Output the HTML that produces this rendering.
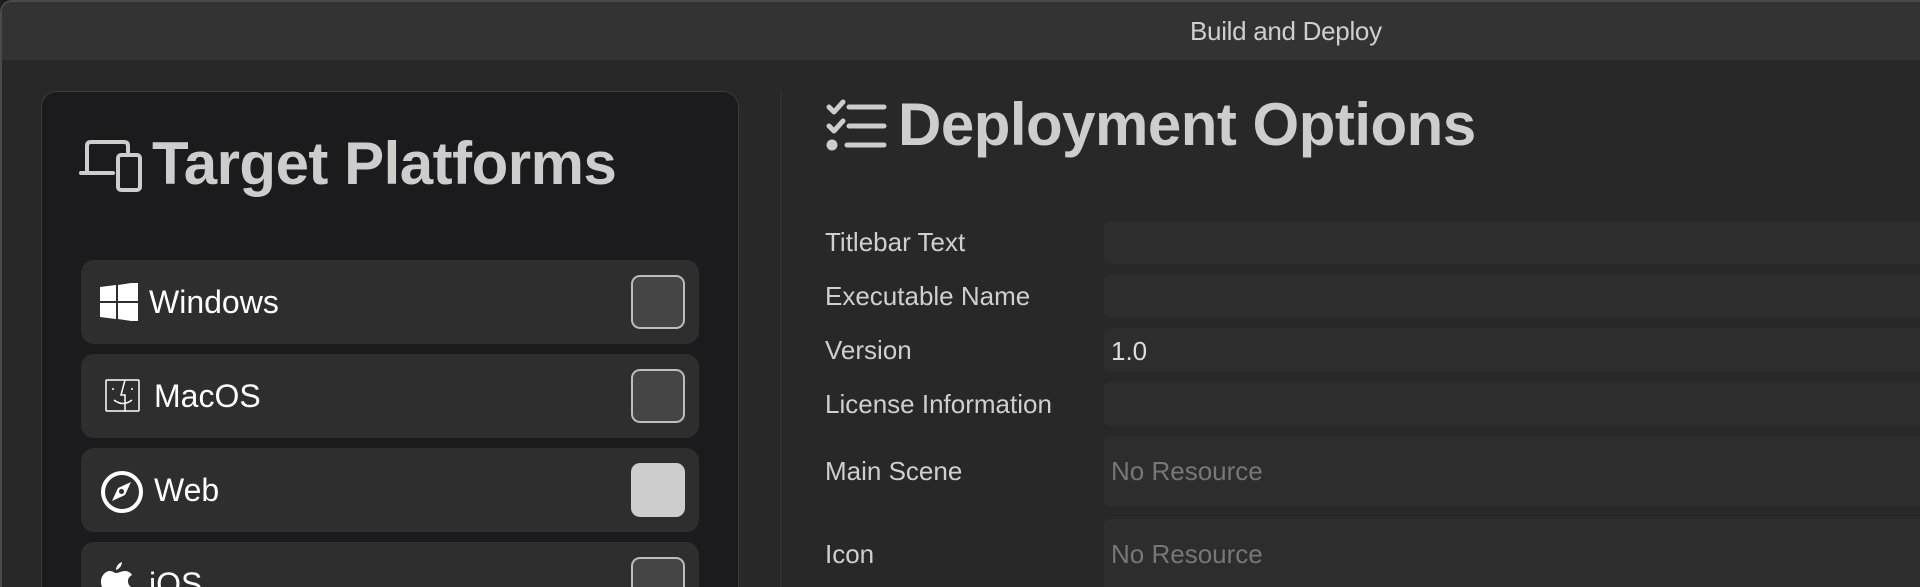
<!DOCTYPE html>
<html style="width:1920px;height:587px;overflow:hidden"><head><meta charset="utf-8"><style>
*{margin:0;padding:0;box-sizing:border-box}
body{width:1920px;height:587px;overflow:hidden;background:#1e1e1e;font-family:"Liberation Sans",sans-serif;position:relative}
.win{position:absolute;left:0;top:0;width:1920px;height:587px;background:#282828;border:2px solid #4a4a4a;border-right:none;border-bottom:none;border-radius:12px 0 0 0;overflow:hidden}
.tb{position:absolute;left:0;top:0;right:0;height:58px;background:#333}
.tt{position:absolute;left:1188px;top:14px;font-size:26px;color:#cfcfcf;letter-spacing:-0.3px}
.a{position:absolute}
.panel{position:absolute;left:41px;top:91px;width:698px;height:496px;background:#1b1b1d;border:1px solid #3a3a3c;border-bottom:none;border-radius:16px 16px 0 0}
.h{position:absolute;font-size:60px;font-weight:bold;color:#cdcdcd;letter-spacing:-0.5px}
.row{position:absolute;left:81px;width:618px;height:84px;background:#2e2e2e;border-radius:13px;overflow:hidden}
.row .l{position:absolute;top:24px;font-size:32px;color:#fff}
.cb{position:absolute;left:550px;top:15px;width:54px;height:54px;border-radius:9px;background:#454545;border:2px solid #bdbdbd}
.cb.on{background:#cdcdcd;border-color:#cdcdcd}
.lab{position:absolute;left:825px;font-size:26px;color:#cfcfcf}
.f{position:absolute;left:1104px;width:816px;background:#2d2d2d;border-radius:6px 0 0 6px}
.f span{position:absolute;left:7px;font-size:26px}
.div{position:absolute;left:780px;top:91px;width:2px;height:496px;background:#2e2e2e}
</style></head><body>
<div class="win">
<div class="tb"></div>
<div class="tt">Build and Deploy</div>
</div>
<div class="panel"></div>
<div class="div"></div>
<svg class="a" style="left:70px;top:130px" width="80" height="70" viewBox="0 0 80 70" fill="none" stroke="#cdcdcd" stroke-width="4" stroke-linecap="round" stroke-linejoin="round">
<path d="M17 43V16q0-4 4-4h33q4 0 4 4v6"/><path d="M11 43h32"/><rect x="48" y="25" width="22" height="35" rx="3"/></svg>
<div class="h" style="left:152px;top:129px">Target Platforms</div>

<div class="row" style="top:260px">
<svg class="a" style="left:19px;top:23px" width="38" height="38" viewBox="0 0 38 38" fill="#fff"><path d="M0 4l16-2v16H0zM18 2l20-3v19H18zM0 20h16v16L0 34zM18 20h20v19l-20-3z"/></svg>
<div class="l" style="left:68px">Windows</div><div class="cb"></div></div>

<div class="row" style="top:354px">
<svg class="a" style="left:24px;top:25px" width="36" height="34" viewBox="0 0 36 34" fill="none" stroke="#fff" stroke-width="1.5"><rect x="1" y="1" width="33" height="31" rx="1"/><path d="M20 1l-4 15h4v16M9 21q9 7 18 0"/><path d="M8 9v2M27 9v2"/></svg>
<div class="l" style="left:73px">MacOS</div><div class="cb"></div></div>

<div class="row" style="top:448px">
<svg class="a" style="left:19px;top:22px" width="44" height="44" viewBox="0 0 44 44"><circle cx="22" cy="22" r="19" fill="none" stroke="#fff" stroke-width="4"/><path d="M31 12L25 25 12 31 18 18z" fill="#fff"/><circle cx="21.5" cy="21.5" r="2.5" fill="#2e2e2e"/></svg>
<div class="l" style="left:73px">Web</div><div class="cb on"></div></div>

<div class="row" style="top:542px;height:45px;border-radius:13px 13px 0 0">
<svg class="a" style="left:18px;top:20px" width="34" height="40" viewBox="0 0 34 40" fill="#fff"><path d="M17 11c3 0 5-2 9-2 3 0 6 2 7 4-6 3-5 11 1 13-2 5-5 10-8 10-2 0-3-1-6-1s-4 1-6 1C9 36 2 27 2 20 2 13 7 9 11 9c3 0 4 2 6 2zM17 8c0-4 3-7 6-8 0 4-3 7-6 8z"/></svg>
<div class="l" style="left:68px">iOS</div><div class="cb"></div></div>

<svg class="a" style="left:815px;top:90px" width="80" height="70" viewBox="0 0 80 70" fill="none" stroke="#cdcdcd" stroke-width="5" stroke-linecap="round" stroke-linejoin="round">
<path d="M14 17l5 5 9-10M14 36l5 5 9-10"/><path d="M34 17h35M34 36h35M32 55h37"/><circle cx="17" cy="55" r="3" fill="#cdcdcd"/></svg>
<div class="h" style="left:898px;top:90px">Deployment Options</div>

<div class="lab" style="top:227px">Titlebar Text</div>
<div class="lab" style="top:281px">Executable Name</div>
<div class="lab" style="top:335px">Version</div>
<div class="lab" style="top:389px">License Information</div>
<div class="lab" style="top:456px">Main Scene</div>
<div class="lab" style="top:539px">Icon</div>

<div class="f" style="top:221px;height:43px"></div>
<div class="f" style="top:274px;height:44px"></div>
<div class="f" style="top:328px;height:44px"><span style="top:8px;color:#dcdcdc">1.0</span></div>
<div class="f" style="top:382px;height:44px"></div>
<div class="f" style="top:436px;height:71px"><span style="top:20px;color:#777">No Resource</span></div>
<div class="f" style="top:519px;height:68px;border-radius:6px 0 0 0"><span style="top:20px;color:#777">No Resource</span></div>
</body></html>
